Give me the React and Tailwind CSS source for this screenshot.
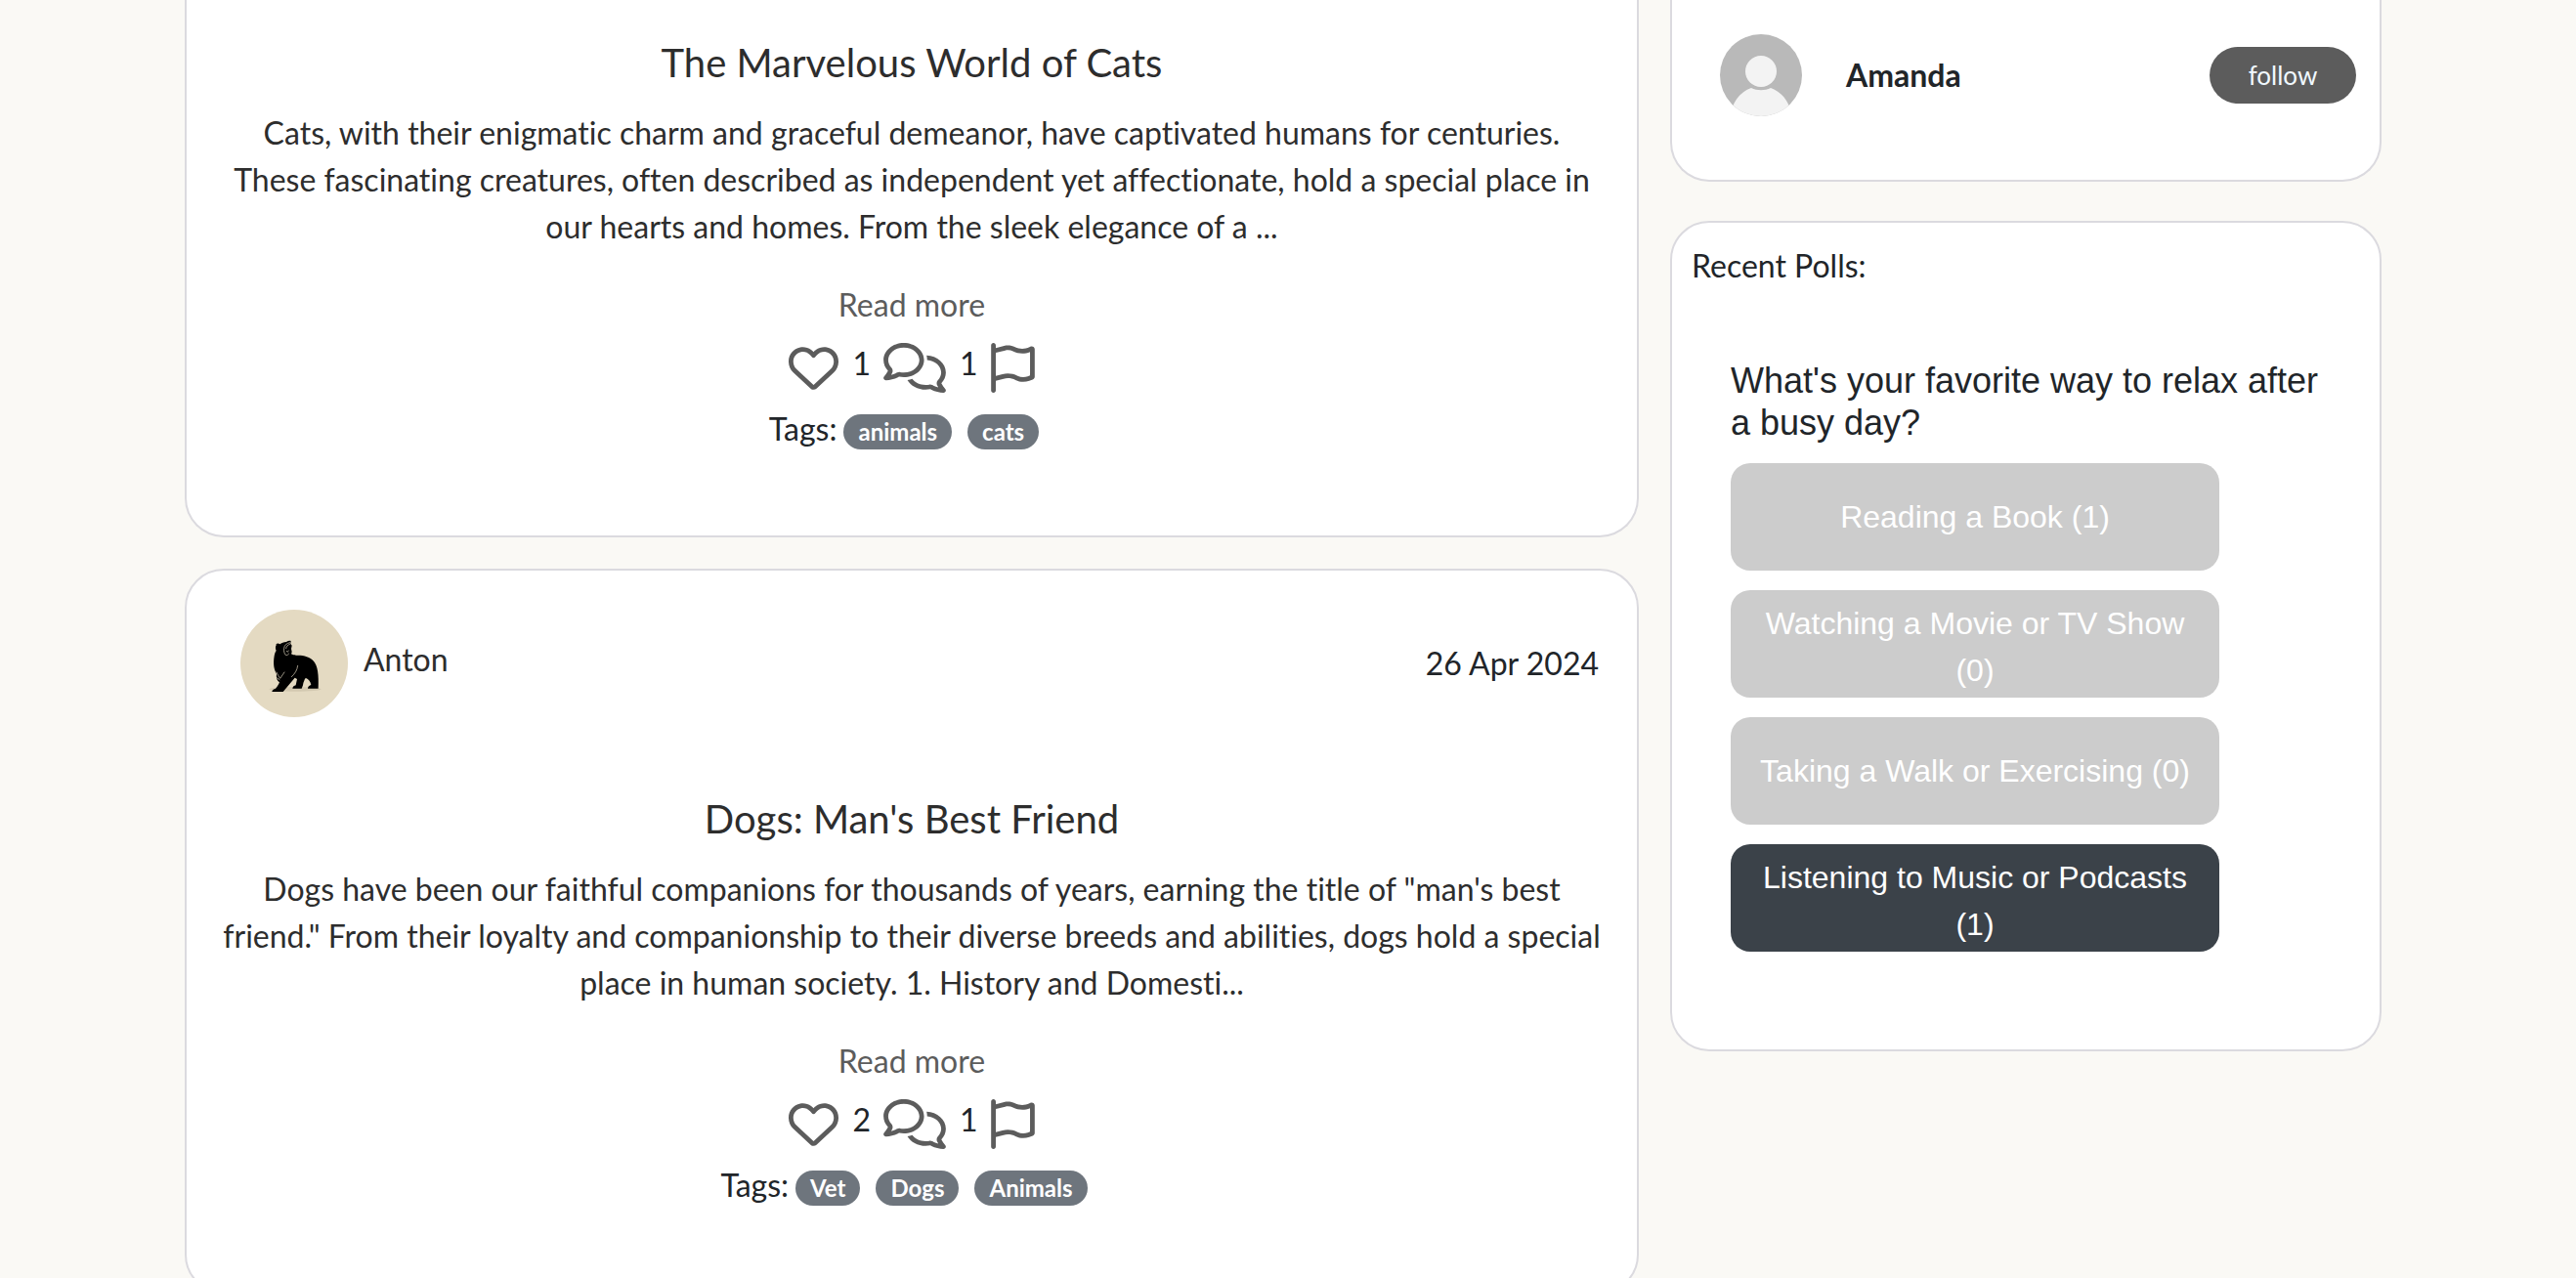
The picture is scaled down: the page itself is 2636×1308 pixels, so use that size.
import React from "react";
import { FaRegHeart, FaRegComments, FaRegFlag } from "react-icons/fa6";

const posts = [
  {
    id: "cats",
    title: "The Marvelous World of Cats",
    text: "Cats, with their enigmatic charm and graceful demeanor, have captivated humans for centuries. These fascinating creatures, often described as independent yet affectionate, hold a special place in our hearts and homes. From the sleek elegance of a ...",
    likes: 1,
    comments: 1,
    tags: ["animals", "cats"],
  },
  {
    id: "dogs",
    author: "Anton",
    date: "26 Apr 2024",
    title: "Dogs: Man's Best Friend",
    text: 'Dogs have been our faithful companions for thousands of years, earning the title of "man\'s best friend." From their loyalty and companionship to their diverse breeds and abilities, dogs hold a special place in human society. 1. History and Domesti...',
    likes: 2,
    comments: 1,
    tags: ["Vet", "Dogs", "Animals"],
  },
];

const pollOptions = [
  { label: "Reading a Book", votes: 1 },
  { label: "Watching a Movie or TV Show", votes: 0 },
  { label: "Taking a Walk or Exercising", votes: 0 },
  { label: "Listening to Music or Podcasts", votes: 1, chosen: true },
];

function BearAvatar() {
  return (
    <svg viewBox="0 0 330 330" className="size-[110px] shrink-0" aria-hidden="true">
      <circle cx="165" cy="165" r="165" fill="#e4dac2" />
      <g transform="translate(69 72)">
        <ellipse cx="99" cy="172" rx="80" ry="7" fill="#d3c9b1" />
        <path
          d="M41 33c4-3 8-2 11 1 5-4 12-7 20-7 5-4 11-5 14-3l-1 8 4 6-2 10 2 10-2 6c4 3 9 3 15 4 22-1 42 4 54 18 12 14 16 40 14 84h-32c0-6 5-9 10-11-2-11-8-18-16-21l-3 2c-3 8-6 14-6 20l-4 10H91c1-6 5-9 10-10l4-19-7-4-36 43H28c0-5 5-9 11-10 6-7 10-13 12-19-7-5-11-14-9-26-8-13-11-30-7-55 1-7 3-12 6-16-3-5-3-13 0-17z"
          fill="#000"
        />
        <path
          d="M83 29c-10 2-17 8-18 17-1 8 0 16 5 21 5 2 8 0 9-4M84 33c-8 3-12 8-13 14m2 8c2 4 5 3 6-1M42 120c4 10 8 14 11 19l13-19M44 138l7 5M107 100c-2 14-8 24-19 34"
          fill="none"
          stroke="#e4dac2"
          strokeWidth="2"
          strokeLinecap="round"
        />
      </g>
    </svg>
  );
}

function PersonAvatar() {
  return (
    <svg viewBox="0 0 84 84" className="size-[84px] shrink-0" aria-hidden="true">
      <defs>
        <clipPath id="person-clip">
          <circle cx="42" cy="42" r="42" />
        </clipPath>
      </defs>
      <g clipPath="url(#person-clip)">
        <rect width="84" height="84" fill="#b9b9b9" />
        <path d="M12 78c2-10 9-19 20-23 6 3 14 3 20 0 11 4 18 13 20 23v8H12z" fill="#f3f3f3" />
        <circle cx="42" cy="38" r="16" fill="#f3f3f3" />
      </g>
    </svg>
  );
}

function Post({ post }) {
  const withHeader = Boolean(post.author);
  return (
    <article
      className={
        withHeader
          ? "rounded-[40px] border-2 border-[#dbdadf] bg-white px-[35px] pt-10 pb-[85px]"
          : "rounded-b-[40px] border-2 border-t-0 border-[#dbdadf] bg-white px-[35px] pt-10 pb-[85px]"
      }
    >
      {withHeader && (
        <header className="mb-20 flex items-center pr-1 pl-5">
          <BearAvatar />
          <a href="#anton" className="mb-2 ml-4 text-[#2d2d2d]">
            {post.author}
          </a>
          <time className="ml-auto">{post.date}</time>
        </header>
      )}
      <div className="text-center">
        <h2 className="text-[40px] leading-[48px] text-[#2d2d2d]">{post.title}</h2>
        <p className="mt-6 text-[#2d2d2d]">{post.text}</p>
        <a href={"#" + post.id} className="mt-8 block text-[#5c5c5c]">
          Read more
        </a>
        <div className="mt-3 flex h-12 items-center justify-center">
          <button type="button" aria-label="Like" className="mt-2 text-[#5c5c5c]">
            <FaRegHeart className="size-[51px]" />
          </button>
          <span className="mr-[13px] ml-[14px]">{post.likes}</span>
          <button type="button" aria-label="Comments" className="mt-2 text-[#5c5c5c]">
            <FaRegComments className="h-[51px] w-16" />
          </button>
          <span className="mr-[13px] ml-[14px]">{post.comments}</span>
          <button type="button" aria-label="Report" className="mt-2 text-[#5c5c5c]">
            <FaRegFlag className="h-[51px] w-[45px]" />
          </button>
        </div>
        <div className="mt-[19px] flex items-center justify-center">
          <span className="mr-[7px]">Tags:</span>
          {post.tags.map((tag) => (
            <span
              key={tag}
              className="mt-[6px] mr-4 rounded-full bg-[#6e757d] px-[15px] text-[24px] leading-[36px] font-bold text-white"
            >
              {tag}
            </span>
          ))}
        </div>
      </div>
    </article>
  );
}

export default function App() {
  return (
    <div className="h-screen overflow-hidden bg-[#faf9f5] pr-[183px] pl-[173px] font-['Lato',sans-serif] text-[32px] leading-[48px] text-[#212529] [font-variant-ligatures:none]">
      <div className="flex items-start">
        <main className="flex w-2/3 flex-col gap-8 px-4">
          {posts.map((post) => (
            <Post key={post.id} post={post} />
          ))}
        </main>
        <aside className="flex w-1/3 flex-col gap-10 px-4">
          <section className="flex items-center rounded-b-[40px] border-2 border-t-0 border-[#dbdadf] bg-white pt-[35px] pr-6 pb-[65px] pl-[49px]">
            <PersonAvatar />
            <a href="#amanda" className="ml-[45px] font-bold">
              Amanda
            </a>
            <button
              type="button"
              className="ml-auto h-[58px] w-[150px] rounded-full bg-[#5c5c5c] text-[26px] text-[#f0f8ff]"
            >
              follow
            </button>
          </section>
          <section className="rounded-[40px] border-2 border-[#dbdadf] bg-white px-5 pt-5 pb-[100px]">
            <h2>Recent Polls:</h2>
            <div className="mt-[72px] px-10 font-['Liberation_Sans',sans-serif]">
              <h3 className="text-[36px] leading-[43px]">
                What's your favorite way to relax after a busy day?
              </h3>
              <div className="mt-5 flex flex-col gap-5">
                {pollOptions.map((option) => (
                  <button
                    key={option.label}
                    type="button"
                    className={
                      option.chosen
                        ? "h-[110px] w-[500px] rounded-[20px] bg-[#3b4249] px-5 py-[10px] text-white"
                        : "h-[110px] w-[500px] rounded-[20px] bg-[#cccccc] px-5 py-[10px] text-white"
                    }
                  >
                    {option.label} ({option.votes})
                  </button>
                ))}
              </div>
            </div>
          </section>
        </aside>
      </div>
    </div>
  );
}
